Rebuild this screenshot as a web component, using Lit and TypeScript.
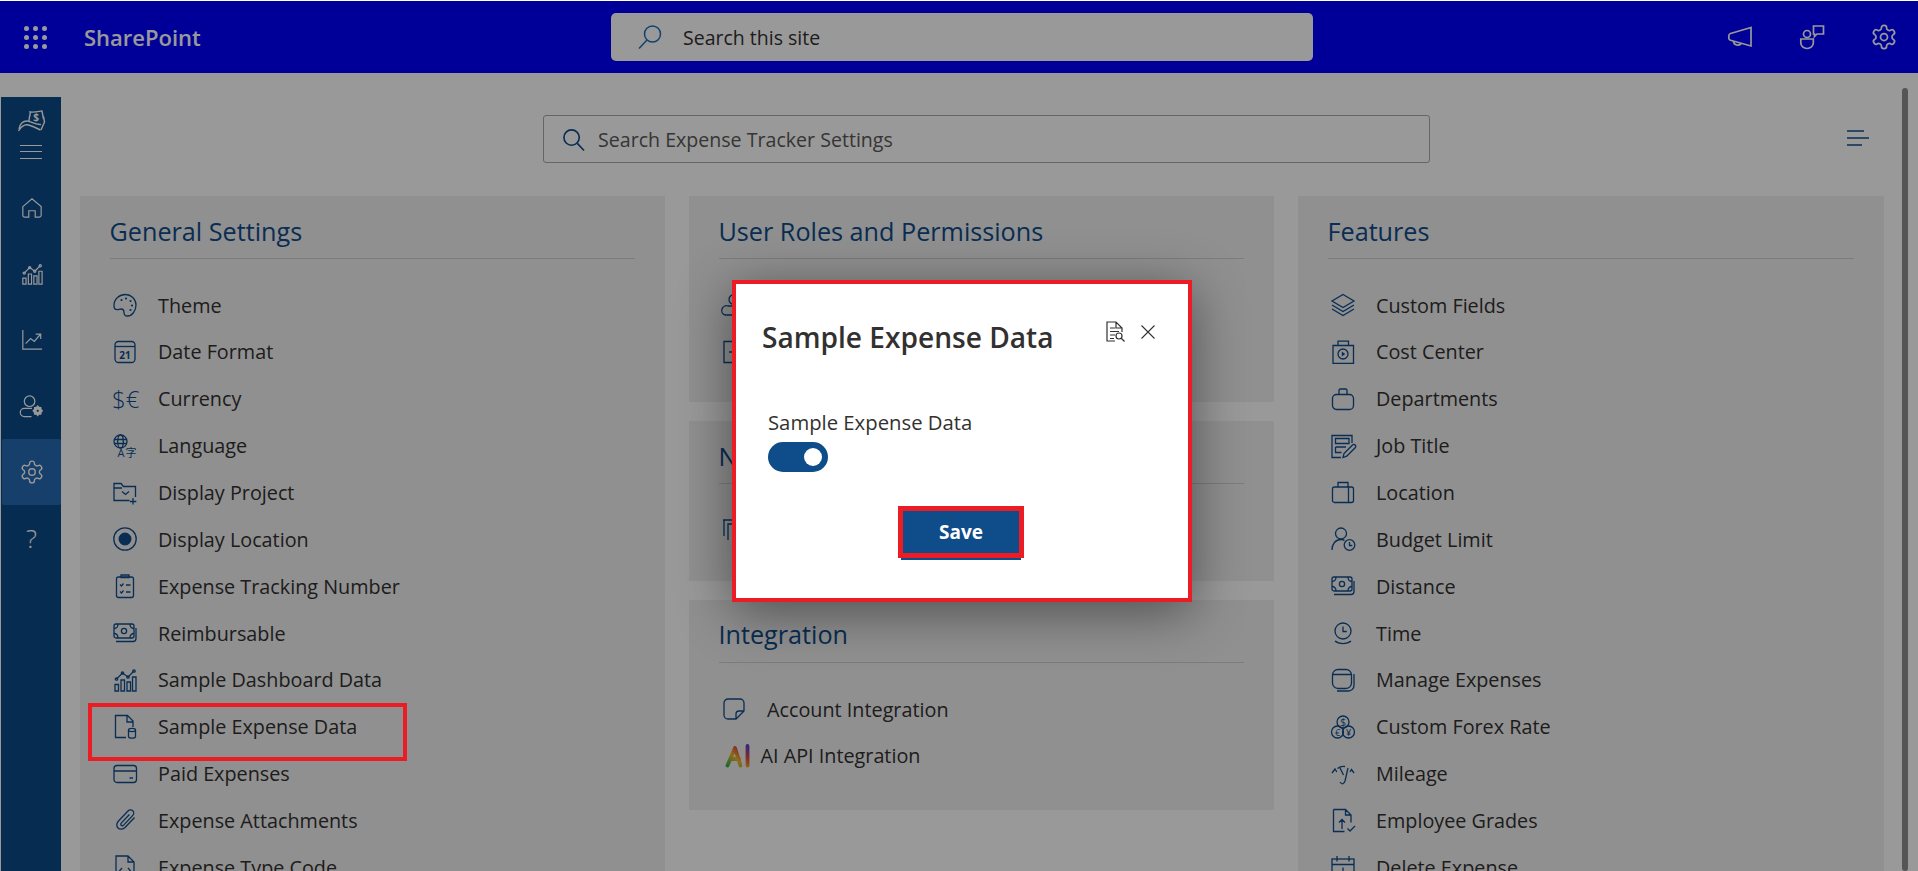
import { LitElement, css, html, svg } from 'lit';
import { customElement } from 'lit/decorators.js';

const GEAR = svg`<path d="M12.22 2h-.44a2 2 0 0 0-2 2v.18a2 2 0 0 1-1 1.73l-.43.25a2 2 0 0 1-2 0l-.15-.08a2 2 0 0 0-2.73.73l-.22.38a2 2 0 0 0 .73 2.73l.15.1a2 2 0 0 1 1 1.72v.51a2 2 0 0 1-1 1.74l-.15.09a2 2 0 0 0-.73 2.73l.22.38a2 2 0 0 0 2.73.73l.15-.08a2 2 0 0 1 2 0l.43.25a2 2 0 0 1 1 1.73V20a2 2 0 0 0 2 2h.44a2 2 0 0 0 2-2v-.18a2 2 0 0 1 1-1.73l.43-.25a2 2 0 0 1 2 0l.15.08a2 2 0 0 0 2.73-.73l.22-.39a2 2 0 0 0-.73-2.73l-.15-.08a2 2 0 0 1-1-1.74v-.5a2 2 0 0 1 1-1.74l.15-.09a2 2 0 0 0 .73-2.73l-.22-.38a2 2 0 0 0-2.73-.73l-.15.08a2 2 0 0 1-2 0l-.43-.25a2 2 0 0 1-1-1.73V4a2 2 0 0 0-2-2z"/><circle cx="12" cy="12" r="3"/>`;

const MONEY = svg`<rect x="1" y="3" width="20" height="14" rx="2"/><circle cx="11" cy="10" r="2.600"/><path d="M1 7.500c2.500 0 4-1.800 4-4.500M17 3c0 2.700 1.500 4.500 4 4.500M1 12.500c2.500 0 4 1.800 4 4.500M17 17c0-2.700 1.500-4.500 4-4.500M3 20.500h17c1.700 0 3-1.300 3-3V7"/>`;

const BARS = svg`<path d="M2 16.500h3.500V23H2zM8 12h3.500v11H8zM14 14h3.500v9H14zM19.500 9H23v14h-3.500z"/><path d="M3.500 11 9.500 5l5.500 4L21 3"/><circle cx="3.500" cy="11" r="1.200"/><circle cx="9.500" cy="5" r="1.200"/><circle cx="15" cy="9" r="1.200"/><circle cx="21" cy="3" r="1.200"/>`;

const ICONS: Record<string, unknown> = {
  palette: svg`<path d="M12.500 1.500c5.500 0 10.500 4.300 10.500 10.500 0 6-4 11-8.500 11-2.500 0-3.500-1.500-3.500-3.500s-1-3.500-3-3.500c-1.500 0-2.300.7-3.800.7C2.300 16.700 1 15 1 12.500 1 6 6.500 1.500 12.500 1.500z"/><g fill="currentColor" stroke="none"><circle cx="8.500" cy="7" r="1.100"/><circle cx="13" cy="5.500" r="1.100"/><circle cx="17.500" cy="8" r="1.100"/><circle cx="19" cy="12.500" r="1.100"/><circle cx="17.500" cy="17" r="1.100"/></g>`,
  calendar: svg`<rect x="2" y="1.500" width="20" height="21" rx="3.500"/><path d="M2 6.500h20"/><text x="12" y="18.500" text-anchor="middle" class="gl" font-size="10" font-weight="700">21</text>`,
  currency: svg`<text x="-1" y="20.500" class="gl thin" font-size="24">$€</text>`,
  language: svg`<circle cx="7.500" cy="7.500" r="6.500"/><ellipse cx="7.500" cy="7.500" rx="2.800" ry="6.500"/><path d="M1 5.500h13M1 9.500h13"/><text x="4.500" y="23" class="gl" font-size="11">A</text><text x="12.500" y="22.500" class="gl cjk" font-size="11">字</text>`,
  folder: svg`<path d="M22.500 17V6.500h-12l-2.500-3H1V20.500h15.500"/><path d="M9 11.500l3.500 3 3.500-3M1 8h8"/><path d="M20 18v6.500M16.800 21.500h6.500"/>`,
  radio: svg`<circle cx="12" cy="12" r="11.200"/><circle cx="12" cy="12" r="5.800" fill="currentColor"/>`,
  tracking: svg`<rect x="3.500" y="3" width="17" height="20.500" rx="2"/><path d="M8 3V1h8v2.500H8zM7 10.500l1.500 1.500 2-2.500M13 11h4.500M7 17.500 8.500 19l2-2.500M13 18h4.500"/>`,
  money: MONEY,
  bars: BARS,
  filedb: svg`<path d="M13 22.500H2.500v-22H14.500L20 6v6M14 1v6h6"/><ellipse cx="19" cy="15" rx="3.500" ry="1.600"/><path d="M15.500 15v6.500c0 1 1.500 1.700 3.500 1.700s3.500-.7 3.500-1.700V15"/>`,
  card: svg`<rect x="1" y="3.500" width="22.500" height="17" rx="3"/><path d="M1 9h22.500M16.500 16h3.500"/>`,
  clip: svg`<path d="M21.500 9.500l-9.500 10c-2 2-5.200 2.300-7 .5s-1.500-5 .5-7l9.500-10c1.300-1.300 3.500-1.500 4.800-.2s1.100 3.500-.2 4.800l-9 9.500c-.7.7-1.800.8-2.400.2s-.5-1.700.2-2.400l8-8.400"/>`,
  filecode: svg`<path d="M3 1h12l6 6v16H3zM15 1v6h6M9 13l-3 3.500L9 20M15 13l3 3.500-3 3.500"/>`,
  layers: svg`<path d="M12 1.500 23 8 12 14.500 1 8zM1 12l11 6.500L23 12M1 16l11 6.500L23 16"/>`,
  cost: svg`<path d="M7 5.500V1.200h10.500v4.300M2 5.500h20.500v17.800H2z"/><circle cx="12" cy="14" r="5"/><path d="M10.800 11.500l3.500 2.500-3.500 2.500z" fill="currentColor" stroke="none"/>`,
  briefcase: svg`<rect x="1.500" y="7.500" width="21" height="15" rx="4"/><path d="M8 7.500v-4A1.500 1.500 0 0 1 9.500 2h5A1.500 1.500 0 0 1 16 3.500v4"/>`,
  form: svg`<path d="M21 9V1.500H1v22h9"/><path d="M4.500 4.500H18v5H4.500zM4.500 13H15M4.500 13v5.500h6"/><path d="M12 23.500l1-4 8.500-8.500a1.900 1.900 0 0 1 2.700 2.700l-8.500 8.500z"/>`,
  suitcase: svg`<rect x="1.500" y="7" width="21" height="15.500" rx="2"/><path d="M7 7V2.500h10V7M17.500 7v15.500"/>`,
  personclock: svg`<circle cx="10" cy="6.500" r="5.500"/><path d="M1 23c0-6 3.500-10.500 9-10.500 1.500 0 2.500.3 3.500.8"/><circle cx="18.500" cy="18" r="5.300"/><path d="M18.500 15v3.500h2.800"/>`,
  time: svg`<circle cx="12" cy="10" r="8"/><path d="M12 5.500v5h3.800M4 20c4 3.500 12 3.500 16 0"/>`,
  stack: svg`<rect x="1.500" y="1.500" width="19" height="19" rx="5.500"/><path d="M2 6.500h18M23 6v11.500c0 3-2.500 5.500-5.500 5.500H6"/>`,
  coins: svg`<circle cx="12" cy="7" r="6"/><circle cx="6.500" cy="17" r="6"/><circle cx="17.500" cy="17" r="6"/><text x="12" y="11" text-anchor="middle" class="gl" font-size="10">$</text><text x="6.500" y="20.500" text-anchor="middle" class="gl" font-size="9">€</text><text x="17.500" y="20.500" text-anchor="middle" class="gl" font-size="9">¥</text>`,
  gauge: svg`<path d="M1 11l3-4 1.800 3M6.500 6.500C9 4.500 11.500 4 14 4.500M23 11l-2.500-3.500L19 10M9 20c2 3 4 2 5-1l3-13M9 6l3.500 7"/>`,
  upload: svg`<path d="M2.500 1.500h12l5.500 5.500v7.500M2.500 1.500v22h11M14.500 1.500V7H20M11 21v-9.500M8 14.500l3-3 3 3M16.500 20.500l2.500 2.500 5-5"/>`,
  calplus: svg`<rect x="1" y="4" width="22" height="20"/><path d="M1 9.500h22M6 1v5.500M18 1v5.500M12 12.500v9M7.500 17h9"/>`,
  userrole: svg`<circle cx="12" cy="6.500" r="5"/><path d="M3 22h13a4.500 4.500 0 0 0 0-9H6a4.500 4.500 0 0 0-3 9z"/>`,
  doc: svg`<path d="M2 1.500h20v21H2zM7 12h3"/>`,
  copy: svg`<path d="M2 18V2h15v4M6 22V6h14v16M1 2h16"/>`,
  note: svg`<path d="M22 14V6a4 4 0 0 0-4-4H6a4 4 0 0 0-4 4v12a4 4 0 0 0 4 4h8zM22 14h-5a3 3 0 0 0-3 3v5"/>`,
};

type Row = { label?: string; icon: string; mark?: boolean };

const GENERAL: Row[] = [
  { label: 'Theme', icon: 'palette' },
  { label: 'Date Format', icon: 'calendar' },
  { label: 'Currency', icon: 'currency' },
  { label: 'Language', icon: 'language' },
  { label: 'Display Project', icon: 'folder' },
  { label: 'Display Location', icon: 'radio' },
  { label: 'Expense Tracking Number', icon: 'tracking' },
  { label: 'Reimbursable', icon: 'money' },
  { label: 'Sample Dashboard Data', icon: 'bars' },
  { label: 'Sample Expense Data', icon: 'filedb', mark: true },
  { label: 'Paid Expenses', icon: 'card' },
  { label: 'Expense Attachments', icon: 'clip' },
  { label: 'Expense Type Code', icon: 'filecode' },
];

const FEATURES: Row[] = [
  { label: 'Custom Fields', icon: 'layers' },
  { label: 'Cost Center', icon: 'cost' },
  { label: 'Departments', icon: 'briefcase' },
  { label: 'Job Title', icon: 'form' },
  { label: 'Location', icon: 'suitcase' },
  { label: 'Budget Limit', icon: 'personclock' },
  { label: 'Distance', icon: 'money' },
  { label: 'Time', icon: 'time' },
  { label: 'Manage Expenses', icon: 'stack' },
  { label: 'Custom Forex Rate', icon: 'coins' },
  { label: 'Mileage', icon: 'gauge' },
  { label: 'Employee Grades', icon: 'upload' },
  { label: 'Delete Expense', icon: 'calplus' },
];

@customElement('app-root')
export class AppRoot extends LitElement {
  static styles = css`
    :host {
      display: block;
      position: relative;
      width: 1918px;
      height: 871px;
      overflow: hidden;
      background: #fff;
      color: #323130;
      font-family: 'Open Sans', 'Noto Sans', sans-serif;
    }
    svg {
      display: block;
      fill: none;
      stroke: currentColor;
      stroke-width: 1.3;
      overflow: visible;
    }
    svg.w11 { stroke-width: 1.1; }
    svg.w12 { stroke-width: 1.2; }
    svg.w14 { stroke-width: 1.4; }
    svg.w15 { stroke-width: 1.5; }
    svg.w17 { stroke-width: 1.7; }
    svg.w38 { stroke-width: 3.8; stroke-linecap: round; stroke-linejoin: round; }
    .gl {
      fill: currentColor;
      stroke: none;
      font-family: 'Open Sans', sans-serif;
    }
    .thin { font-weight: 300; }
    .cjk { font-family: 'Noto Sans CJK SC', sans-serif; }

    .topbar {
      display: flex;
      align-items: center;
      height: 72px;
      margin-top: 1px;
      background: #0000ff;
      color: #fff;
    }
    .waffle {
      display: grid;
      grid-template-columns: repeat(3, 5px);
      gap: 4px;
      margin-left: 24px;
    }
    .waffle i { width: 5px; height: 5px; border-radius: 50%; background: #fff; }
    .brand {
      width: 527px;
      margin-left: 37px;
      font-size: 22px;
      font-weight: 600;
    }
    .site-search {
      display: flex;
      align-items: center;
      gap: 21px;
      width: 702px;
      height: 48px;
      padding-left: 27px;
      box-sizing: border-box;
      background: #fff;
      border-radius: 5px;
      color: #323130;
      font-size: 19.500px;
    }
    .site-search svg { color: #1f6fb5; }
    .top-actions {
      display: flex;
      align-items: center;
      margin-left: auto;
      margin-right: 20px;
    }
    .top-actions svg + svg { margin-left: 48px; }
    .top-actions svg.gear { margin-left: 46px; }

    .body { display: flex; padding-left: 1px; }
    .side {
      flex: none;
      width: 60px;
      height: 774px;
      margin-top: 24px;
      background: #0a4a88;
      color: #fff;
    }
    .side-head {
      display: flex;
      flex-direction: column;
      align-items: center;
      gap: 14px;
      height: 78px;
      padding-top: 13px;
      box-sizing: border-box;
    }
    .burger { width: 22px; height: 14px; border-top: 1.5px solid #fff; border-bottom: 1.5px solid #fff; box-sizing: border-box; }
    .burger::after { content: ''; display: block; height: 1.5px; margin-top: 4.800px; background: #fff; }
    .nav {
      display: flex;
      align-items: center;
      justify-content: center;
      height: 66px;
      margin-left: 1px;
      border-radius: 2px;
      font-size: 26px;
      font-weight: 300;
    }
    .nav.on { background: #2569b4; }

    .content { flex: 1; min-width: 0; }
    .tools {
      display: flex;
      align-items: flex-start;
      height: 99px;
      padding-top: 42px;
      box-sizing: border-box;
    }
    .find {
      display: flex;
      align-items: center;
      gap: 13px;
      width: 887px;
      height: 48px;
      margin-left: 482px;
      padding-left: 18px;
      box-sizing: border-box;
      background: #fff;
      border: 1px solid #a9a9a9;
      border-radius: 3px;
      color: #5a5958;
      font-size: 19.600px;
    }
    .find svg { color: #0f4c8a; }
    .lines { margin-left: 417px; margin-top: 15px; color: #0f4c8a; }

    .grid {
      display: grid;
      grid-template-columns: 585px 585px 586px;
      gap: 24px;
      padding-left: 18.500px;
      margin-top: 24px;
    }
    .stack { display: flex; flex-direction: column; gap: 19px; }
    .card { background: #f0f0f0; padding-bottom: 27px; }
    .card.loose { padding-bottom: 31px; }
    .card h2 {
      display: flex;
      align-items: center;
      height: 55px;
      margin: 0 30px;
      padding-top: 7px;
      border-bottom: 1px solid #cfcfcf;
      color: #0f4c8a;
      font-size: 25.200px;
      font-weight: 400;
    }
    .rows { margin-top: 22.700px; }
    .row {
      position: relative;
      display: flex;
      align-items: center;
      gap: 18.500px;
      height: 46.850px;
      padding-left: 30px;
      font-size: 19.800px;
    }
    .row .ico { flex: none; display: flex; justify-content: center; width: 30px; color: #0f4c8a; }
    .row.ai { gap: 10px; }
    .row.ai .ico { width: 32px; justify-content: flex-end; }
    .mark {
      position: absolute;
      z-index: 11;
      top: 0;
      left: 8px;
      width: 319px;
      height: 58px;
      box-sizing: border-box;
      border: 4px solid #ec1c24;
    }
    .scroll {
      position: absolute;
      top: 88px;
      bottom: 0;
      right: 10px;
      width: 6px;
      border-radius: 3px;
      background: #8e8e8e;
    }

    .dim {
      position: absolute;
      inset: 1px 0 0 0;
      z-index: 10;
      display: flex;
      align-items: center;
      justify-content: center;
      padding: 10px 0 0 6px;
      box-sizing: border-box;
      background: rgba(0, 0, 0, 0.4);
    }
    .modal {
      width: 460px;
      height: 322px;
      padding: 35px 33px 0 27px;
      box-sizing: border-box;
      background: #fff;
      border: 4px solid #ec1c24;
      box-shadow: 0 10px 50px rgba(0, 0, 0, 0.45);
      color: #323130;
    }
    .modal-head { display: flex; align-items: flex-start; }
    .modal h1 {
      flex: 1;
      margin: 0 0 0 -1px;
      font-size: 28.100px;
      line-height: 36px;
      font-weight: 600;
    }
    .modal-tools { display: flex; align-items: center; gap: 16px; margin-top: 2px; }
    .field { margin-top: 54px; padding-left: 5px; }
    .field label { display: block; font-size: 20.300px; line-height: 26px; font-weight: 500; }
    .toggle {
      display: flex;
      align-items: center;
      justify-content: flex-end;
      width: 60px;
      height: 30px;
      margin-top: 7px;
      padding-right: 6px;
      box-sizing: border-box;
      background: #0f4c8a;
      border-radius: 15px;
    }
    .toggle i { width: 18px; height: 18px; border-radius: 50%; background: #fff; }
    .actions { display: flex; justify-content: center; margin-top: 34px; margin-left: 4px; }
    .save {
      position: relative;
      width: 126px;
      height: 52px;
      border: 5px solid #ec1c24;
      background: #0f4c8a;
      color: #fff;
      font-family: inherit;
      font-size: 19px;
      font-weight: 700;
      padding: 0;
    }
    .save::after {
      content: '';
      position: absolute;
      left: -2px;
      right: -2px;
      bottom: -7px;
      height: 2px;
      background: #0f4c8a;
    }
  `;

  private icon(name: string, size = 24) {
    return html`<svg width=${size} height=${size} viewBox="0 0 24 24">${ICONS[name]}</svg>`;
  }

  private row(r: Row) {
    return html`<div class="row">
      <span class="ico">${this.icon(r.icon)}</span>
      ${r.label ? html`<span>${r.label}</span>` : ''}
      ${r.mark ? html`<div class="mark"></div>` : ''}
    </div>`;
  }

  private card(title: string, rows: Row[]) {
    return html`<section class="card">
      <h2>${title}</h2>
      <div class="rows">${rows.map((r) => this.row(r))}</div>
    </section>`;
  }

  render() {
    return html`
      <header class="topbar">
        <div class="waffle">${Array.from({ length: 9 }, () => html`<i></i>`)}</div>
        <div class="brand">SharePoint</div>
        <div class="site-search">
          <svg class="w15" width="24" height="24" viewBox="0 0 24 24"><circle cx="14.500" cy="9" r="8"/><path d="M9 15 1 23.500"/></svg>
          <span>Search this site</span>
        </div>
        <div class="top-actions">
          <svg class="w17" width="24" height="24" viewBox="0 0 24 24"><path d="M23 2.500 2.500 8.500C1 9 .8 10 .8 11v2c0 1 .5 2 1.700 2.300L23 21zM5.500 16c0 4.500 6 5.500 8 2"/></svg>
          <svg class="w17" width="24" height="24" viewBox="0 0 24 24"><circle cx="7" cy="9" r="3.500"/><path d="M13.500 1h10v8H17l-2.500 2.500V9h-1zM.8 14h12.500v4a6.250 5.500 0 0 1-12.500 0z"/></svg>
          <svg class="gear w15" width="28" height="28" viewBox="0 0 24 24">${GEAR}</svg>
        </div>
      </header>

      <div class="body">
        <nav class="side">
          <div class="side-head">
            <svg class="w14" width="27" height="21" viewBox="0 0 27 21">
              <path d="M11 11C11 6 13 4 12 2c4 .5 9-.5 12-1l1.500 8"/><path d="M1 19c1-5 4-8 8-8 4 0 7 4 14 3.500"/><path d="M.5 21c3-5 6-7 10-6 4 1 8 3 12 5"/><path d="M25.500 6.500 26.500 12 23 20"/>
              <text x="18" y="11" text-anchor="middle" class="gl" font-size="10" font-weight="700">$</text>
            </svg>
            <div class="burger"></div>
          </div>
          <div class="nav"><svg width="22" height="22" viewBox="0 0 24 24"><path d="M2 10.500 12 2l10 8.500V20a2 2 0 0 1-2 2h-4.500v-7h-7v7H4a2 2 0 0 1-2-2z"/></svg></div>
          <div class="nav"><svg width="22" height="22" viewBox="0 0 24 24">${BARS}</svg></div>
          <div class="nav"><svg width="22" height="22" viewBox="0 0 24 24"><path d="M2 1v21h21M5 16l5.500-5.500 4 3L21 6M16 5.500h5.500V11"/></svg></div>
          <div class="nav"><svg width="23" height="23" viewBox="0 0 24 24"><circle cx="10" cy="6.500" r="5.500"/><path d="M12 22.500H4.500a3.500 3.500 0 0 1 0-8.500h8"/><path d="M18.500 10.500l1.500 1.800 2.300.2.300 2.300 1.600 1.700-1.600 1.700-.3 2.300-2.300.2-1.500 1.800-1.500-1.800-2.300-.2-.3-2.300-1.600-1.700 1.600-1.700.3-2.300 2.300-.2z" fill="currentColor" stroke="none"/><circle cx="18.500" cy="16.500" r="1.200" fill="#0a4a88" stroke="none"/></svg></div>
          <div class="nav on"><svg width="26" height="26" viewBox="0 0 24 24">${GEAR}</svg></div>
          <div class="nav">?</div>
        </nav>

        <main class="content">
          <div class="tools">
            <div class="find">
              <svg class="w17" width="23" height="23" viewBox="0 0 24 24"><circle cx="10" cy="10" r="8"/><path d="M16 16l7 7.500"/></svg>
              <span>Search Expense Tracker Settings</span>
            </div>
            <svg class="lines" width="22" height="16" viewBox="0 0 22 16"><path d="M0 1h17M0 8h22M0 15h15"/></svg>
          </div>
          <div class="grid">
            ${this.card('General Settings', GENERAL)}
            <div class="stack">
              ${this.card('User Roles and Permissions', [{ icon: 'userrole' }, { icon: 'doc' }])}
              ${this.card('Notifications', [{ icon: 'copy' }])}
              <section class="card loose">
                <h2>Integration</h2>
                <div class="rows">
                  ${this.row({ label: 'Account Integration', icon: 'note' })}
                  <div class="row ai">
                    <span class="ico">
                      <svg class="w38" width="26" height="24" viewBox="0 0 26 24">
                        <defs>
                          <linearGradient id="aig" x1="0" y1="1" x2="1" y2="0">
                            <stop offset="0" stop-color="#35b34a"/><stop offset=".4" stop-color="#f0b429"/><stop offset=".7" stop-color="#e0483c"/><stop offset="1" stop-color="#5a3dd8"/>
                          </linearGradient>
                        </defs>
                        <path stroke="url(#aig)" d="M2.500 21.500 10 4l5.500 17.500M22.500 2v19.500M7 15h7"/>
                      </svg>
                    </span>
                    <span>AI API Integration</span>
                  </div>
                </div>
              </section>
            </div>
            ${this.card('Features', FEATURES)}
          </div>
        </main>
      </div>
      <div class="scroll"></div>

      <div class="dim">
        <div class="modal" role="dialog">
          <div class="modal-head">
            <h1>Sample Expense Data</h1>
            <div class="modal-tools">
              <svg class="w12" width="19" height="21" viewBox="0 0 19 21"><path d="M9 20H1V1h9l6 6v4M10 1v6h6M4 7h5M4 10.500h9M4 14h5M4 17.500h4"/><circle cx="13" cy="15" r="3"/><path d="M15 17l3.500 3.500"/></svg>
              <svg class="w11" width="14" height="14" viewBox="0 0 14 14"><path d="M.5.500l13 13M13.500.500l-13 13"/></svg>
            </div>
          </div>
          <div class="field">
            <label>Sample Expense Data</label>
            <div class="toggle"><i></i></div>
          </div>
          <div class="actions"><button class="save">Save</button></div>
        </div>
      </div>
    `;
  }
}
